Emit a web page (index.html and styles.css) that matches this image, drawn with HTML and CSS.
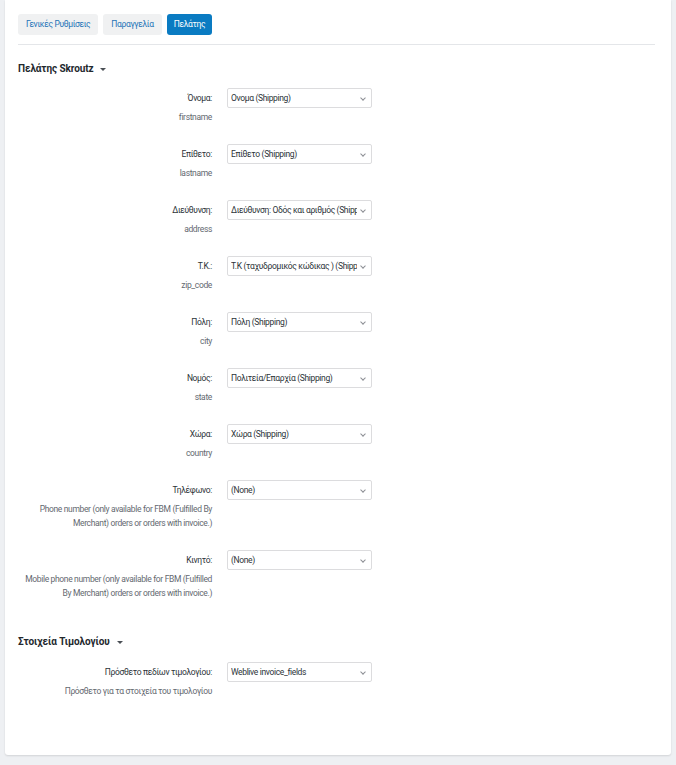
FILE: index.html
```html
<!DOCTYPE html>
<html lang="el">
<head>
<meta charset="utf-8">
<title>Skroutz</title>
<link rel="stylesheet" href="styles.css">
</head>
<body>
<div class="card">
  <nav class="tabs">
    <a class="tab">Γενικές Ρυθμίσεις</a>
    <a class="tab">Παραγγελία</a>
    <a class="tab active">Πελάτης</a>
  </nav>

  <h2 class="section">Πελάτης Skroutz <span class="caret"></span></h2>

  <div class="form">
    <div class="row">
      <div class="lab"><div class="name">Όνομα:</div><div class="desc">firstname</div></div>
      <div class="sel"><span class="val">Ονομα (Shipping)</span></div>
    </div>
    <div class="row">
      <div class="lab"><div class="name">Επίθετο:</div><div class="desc">lastname</div></div>
      <div class="sel"><span class="val">Επίθετο (Shipping)</span></div>
    </div>
    <div class="row">
      <div class="lab"><div class="name">Διεύθυνση:</div><div class="desc">address</div></div>
      <div class="sel"><span class="val">Διεύθυνση: Οδός και αριθμός (Shipping)</span></div>
    </div>
    <div class="row">
      <div class="lab"><div class="name">Τ.Κ.:</div><div class="desc">zip_code</div></div>
      <div class="sel"><span class="val">Τ.Κ (ταχυδρομικός κώδικας ) (Shipping)</span></div>
    </div>
    <div class="row">
      <div class="lab"><div class="name">Πόλη:</div><div class="desc">city</div></div>
      <div class="sel"><span class="val">Πόλη (Shipping)</span></div>
    </div>
    <div class="row">
      <div class="lab"><div class="name">Νομός:</div><div class="desc">state</div></div>
      <div class="sel"><span class="val">Πολιτεία/Επαρχία (Shipping)</span></div>
    </div>
    <div class="row">
      <div class="lab"><div class="name">Χώρα:</div><div class="desc">country</div></div>
      <div class="sel"><span class="val">Χώρα (Shipping)</span></div>
    </div>
    <div class="row">
      <div class="lab"><div class="name">Τηλέφωνο:</div><div class="desc">Phone number (only available for FBM (Fulfilled By Merchant) orders or orders with invoice.)</div></div>
      <div class="sel"><span class="val">(None)</span></div>
    </div>
    <div class="row">
      <div class="lab"><div class="name">Κινητό:</div><div class="desc">Mobile phone number (only available for FBM (Fulfilled By Merchant) orders or orders with invoice.)</div></div>
      <div class="sel"><span class="val">(None)</span></div>
    </div>
  </div>

  <h2 class="section second">Στοιχεία Τιμολογίου <span class="caret"></span></h2>

  <div class="form">
    <div class="row">
      <div class="lab"><div class="name">Πρόσθετο πεδίων τιμολογίου:</div><div class="desc">Πρόσθετο για τα στοιχεία του τιμολογίου</div></div>
      <div class="sel"><span class="val">Weblive invoice_fields</span></div>
    </div>
  </div>
</div>
</body>
</html>
```
FILE: styles.css
```css
html, body {
  margin: 0;
  padding: 0;
}
body {
  background: #eef0f3;
  font-family: Roboto, "Noto Sans", sans-serif;
  font-size: 8.5px;
  letter-spacing: -0.35px;
  color: #3c434a;
  padding: 0 5px 11px 5px;
}
.card {
  background: #fff;
  border-radius: 0 0 3px 3px;
  box-shadow: 0 1px 2px rgba(0,0,0,0.12);
  padding: 14px 13px 50px 13px;
  height: 691px;
}
.tabs {
  display: flex;
  gap: 5px;
  padding-bottom: 9px;
  border-bottom: 1px solid #e4e6e9;
  margin-right: 3px;
}
.tab {
  display: block;
  background: #f0f1f2;
  color: #1e73b7;
  border-radius: 3px;
  padding: 0 8px;
  height: 21px;
  line-height: 21px;
}
.tab.active {
  background: #0a7bc2;
  color: #fff;
  padding: 0 7px;
}
.section {
  margin: 17px 0 12px 0;
  font-size: 10px;
  font-weight: 700;
  color: #23282d;
  line-height: 14px;
  display: flex;
  align-items: center;
  letter-spacing: -0.1px;
}
.caret {
  display: inline-block;
  margin-left: 7px;
  width: 0;
  height: 0;
  border-left: 3px solid transparent;
  border-right: 3px solid transparent;
  border-top: 3px solid #4a4f55;
}
.section.second {
  margin-top: 35px;
  margin-bottom: 13px;
}
.form {
  display: flex;
  flex-direction: column;
  gap: 20px;
}
.row {
  display: grid;
  grid-template-columns: 194px 145px;
  column-gap: 15px;
  align-items: start;
}
.lab {
  text-align: right;
}
.name {
  line-height: 20px;
  color: #2c3338;
}
.desc {
  margin-top: 2px;
  line-height: 14px;
  color: #646970;
}
.sel {
  position: relative;
  height: 20px;
  line-height: 18px;
  box-sizing: border-box;
  border: 1px solid #dcdcde;
  border-radius: 2px;
  padding: 0 14px 0 3px;
  color: #2c3338;
}
.val {
  display: block;
  white-space: nowrap;
  overflow: hidden;
}
.sel::after {
  content: "";
  position: absolute;
  right: 6px;
  top: 7px;
  width: 3px;
  height: 3px;
  border-right: 1px solid #8c8f94;
  border-bottom: 1px solid #8c8f94;
  transform: rotate(45deg);
}
```
